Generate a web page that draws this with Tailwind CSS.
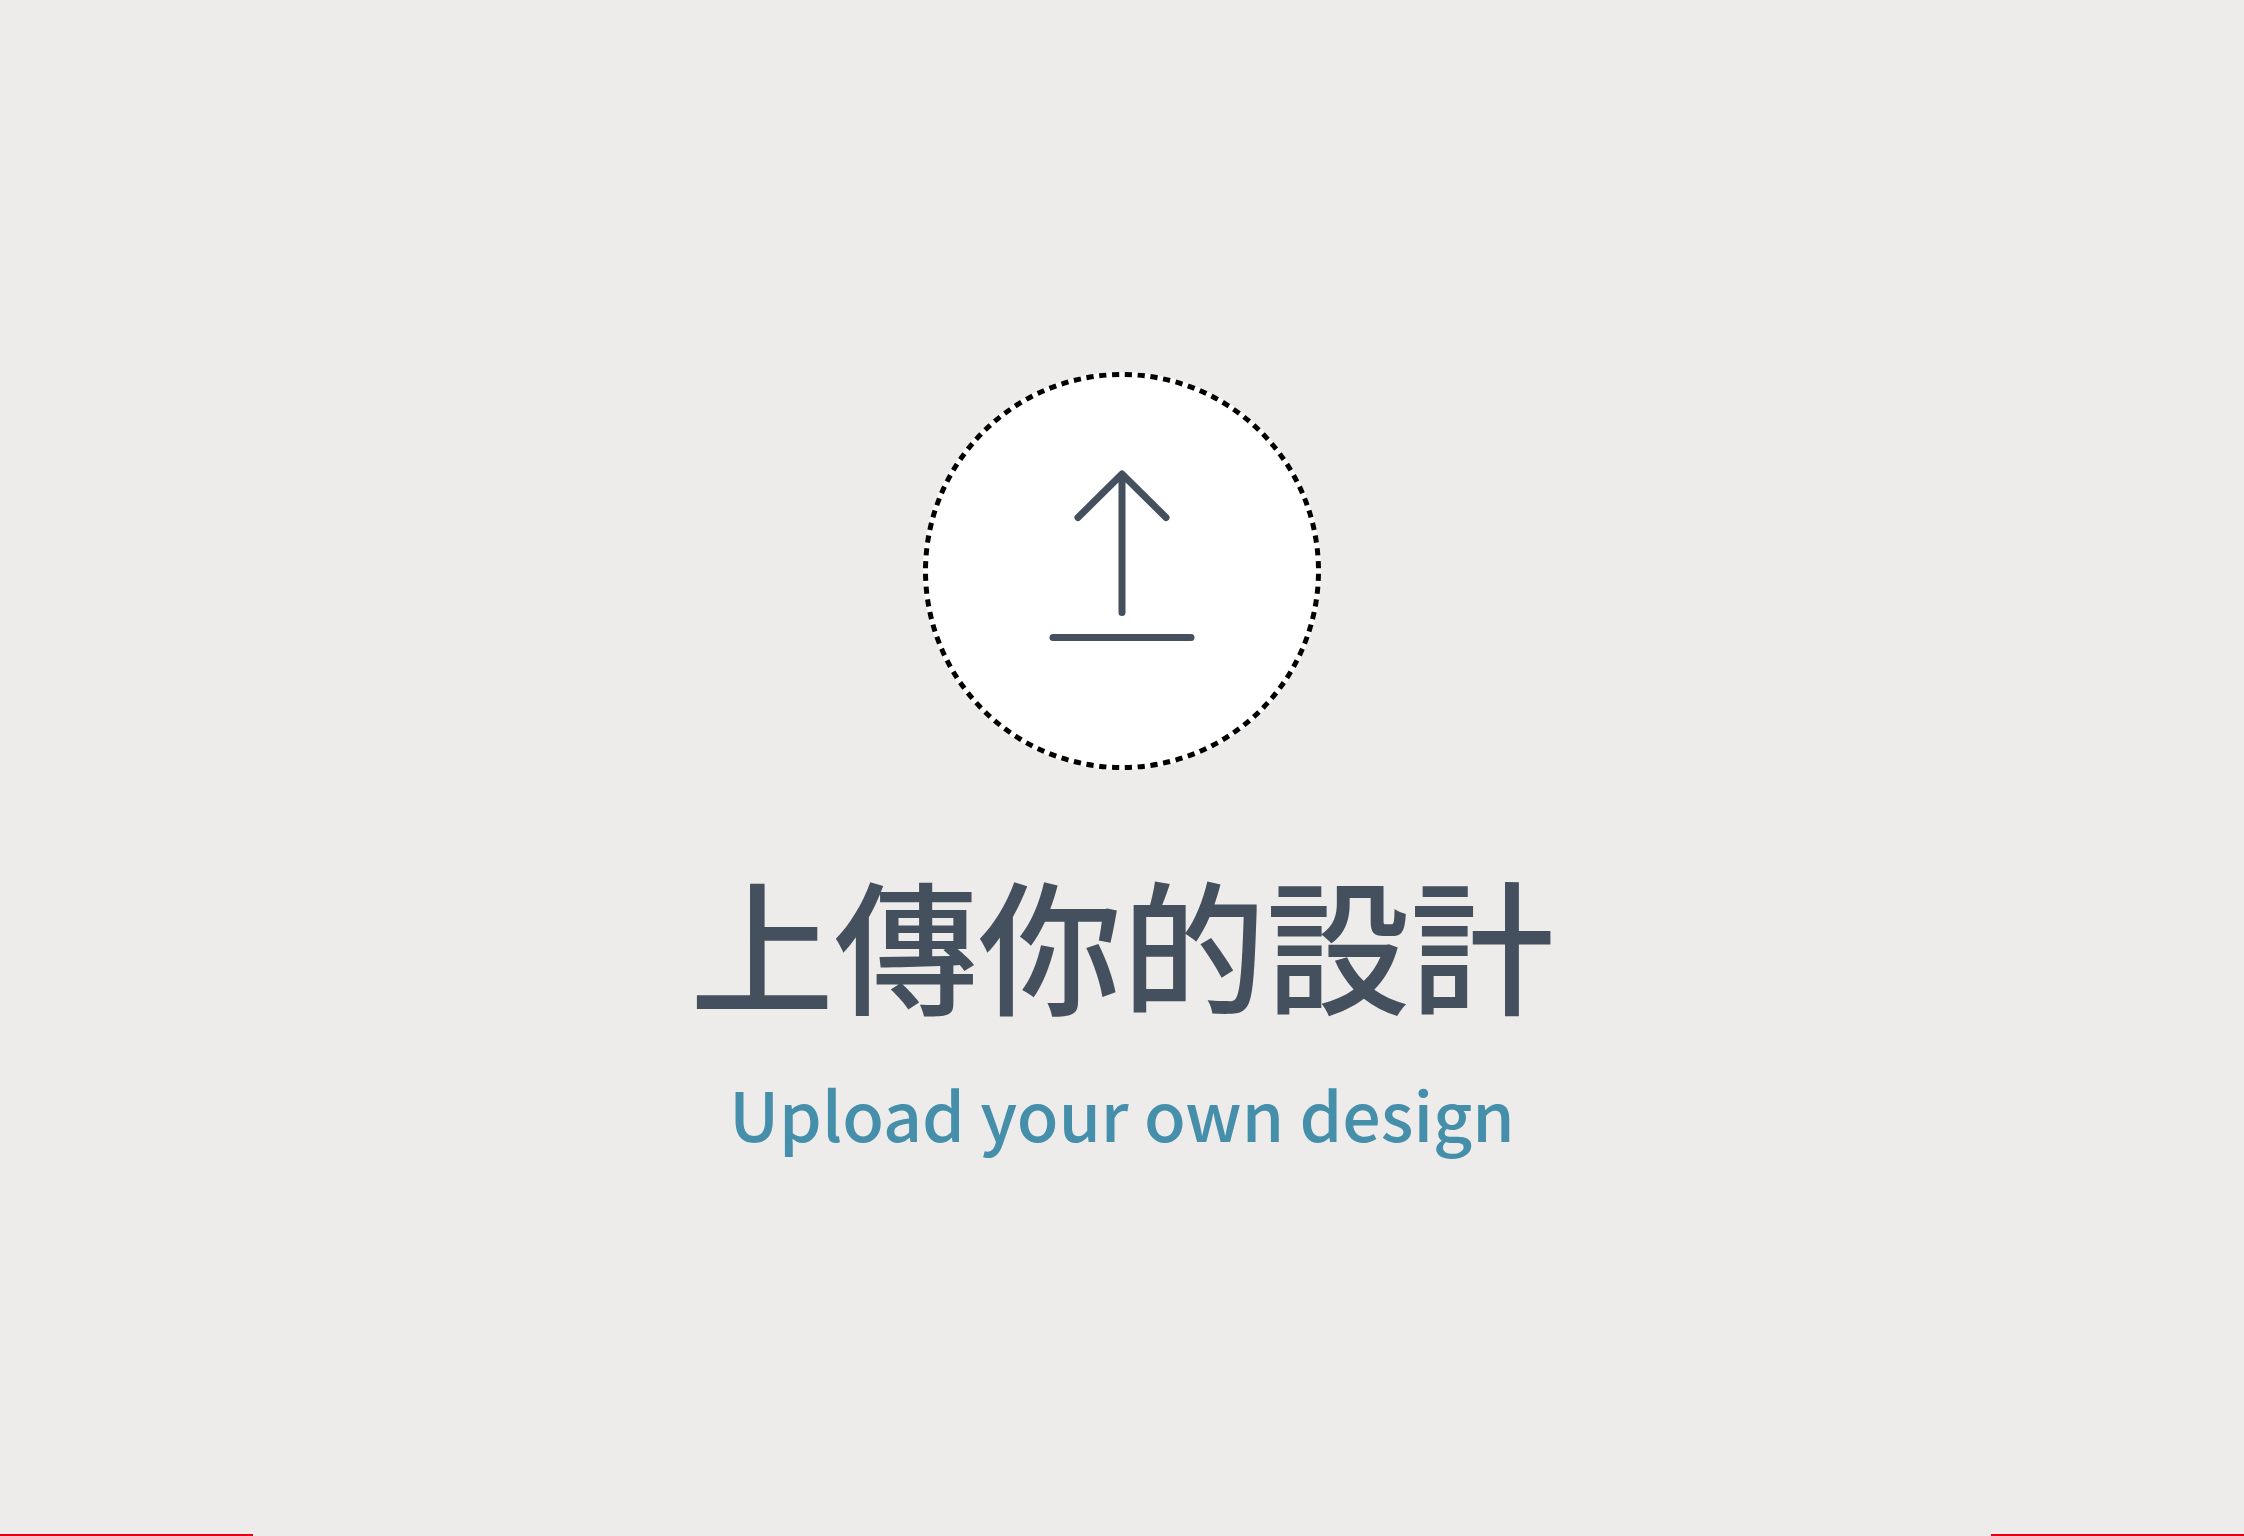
<!DOCTYPE html>
<html lang="zh-Hant">
<head>
<meta charset="utf-8">
<meta name="viewport" content="width=device-width, initial-scale=1">
<title>上傳你的設計</title>
<script src="https://cdn.jsdelivr.net/npm/@tailwindcss/browser@4"></script>
</head>
<body class="flex min-h-screen flex-col bg-[#edecea] font-['Noto_Sans_CJK_JP',sans-serif]">
<main class="flex flex-1 flex-col items-center justify-center">
  <button type="button" aria-labelledby="title" class="block rounded-full">
    <svg class="block size-[400px]" viewBox="0 0 400 400" fill="none" aria-hidden="true">
      <circle cx="200" cy="200" r="199" fill="#fff"/>
      <circle cx="200" cy="200" r="196.5" stroke="#000" stroke-width="5" pathLength="960" stroke-dasharray="5.6 4.4" stroke-dashoffset="-2.2"/>
      <g stroke="#45505e" stroke-width="7" stroke-linecap="round" stroke-linejoin="round">
        <path d="M200 104V241.500M156 146.500L200 103L244 146.500"/>
        <path d="M131 266.500H269"/>
      </g>
    </svg>
  </button>
  <h1 id="title" lang="ja" class="mt-[90px] text-[144px] leading-[160px] font-medium text-[#45505e]">上傳你的設計</h1>
  <p lang="en" class="mt-[44px] text-[68px] leading-[96px] font-medium text-[#468fab]">Upload your own design</p>
</main>
<footer class="flex h-[4px] justify-between">
  <div class="w-[253px] border-t-2 border-[#fbeeee] bg-[#e60013]"></div>
  <div class="w-[253px] border-t-2 border-[#fbeeee] bg-[#e60013]"></div>
</footer>
</body>
</html>
